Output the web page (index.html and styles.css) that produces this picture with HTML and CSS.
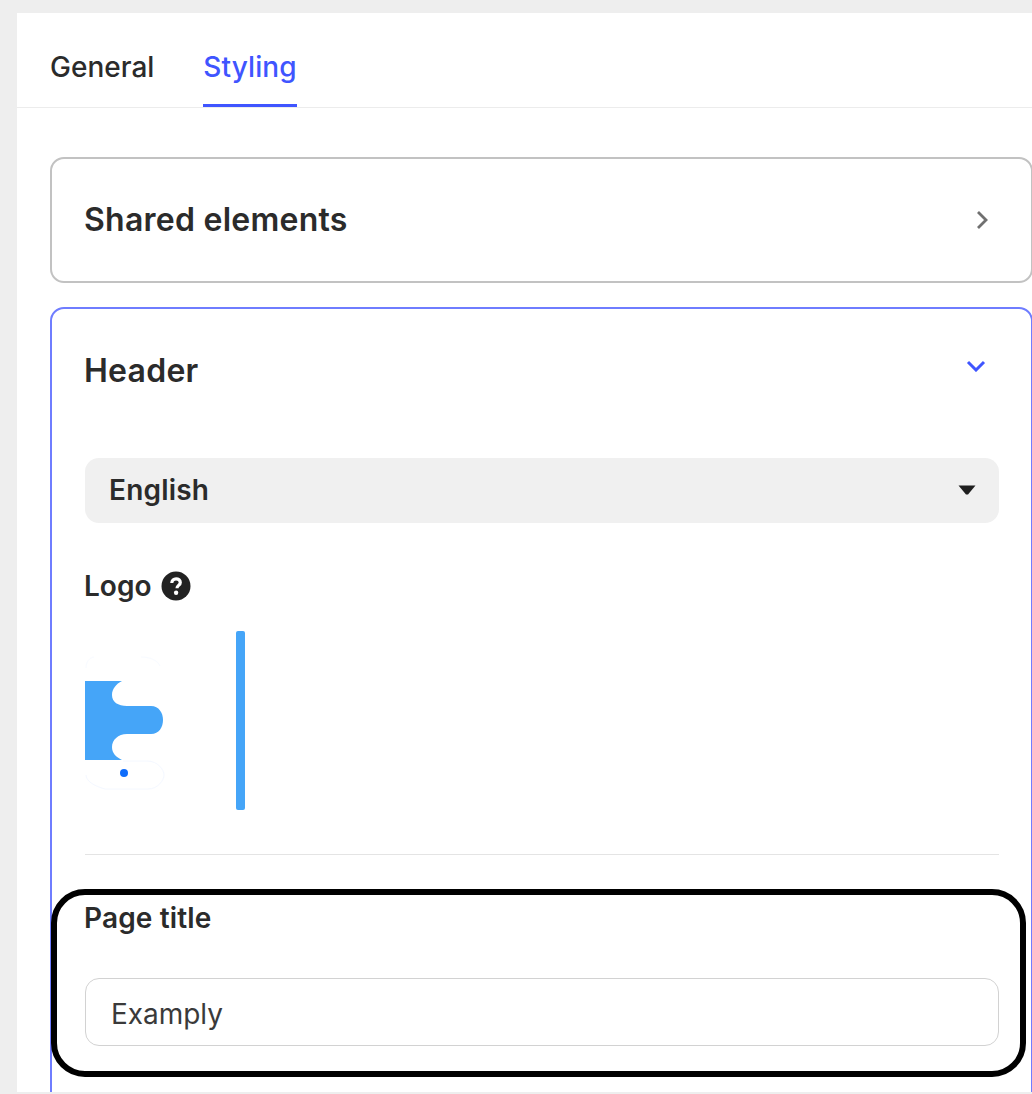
FILE: index.html
```html
<!DOCTYPE html>
<html lang="en">
<head>
<meta charset="utf-8">
<title>Styling</title>
<link rel="stylesheet" href="styles.css">
</head>
<body>
<main class="panel">
  <nav class="tabs">
    <span class="tab">General</span>
    <span class="tab tab-active">Styling</span>
  </nav>
  <div class="content">
    <section class="card">
      <div class="card-head closed">
        <h2 class="card-title">Shared elements</h2>
        <svg class="chev-right" width="14" height="20" viewBox="0 0 14 20"><path d="M3 2l8 8-8 8" fill="none" stroke="#707070" stroke-width="2.800"/></svg>
      </div>
    </section>
    <section class="card card-open">
      <div class="card-head">
        <h2 class="card-title">Header</h2>
        <svg class="chev-down" width="20" height="12" viewBox="0 0 20 12"><path d="M2 2l8 8 8-8" fill="none" stroke="#3f55ff" stroke-width="3"/></svg>
      </div>
      <div class="select">
        <span>English</span>
        <svg width="18" height="10" viewBox="0 0 18 10"><path d="M0.500 0.500h17L10 9.500H8z" fill="#1f1f1f"/></svg>
      </div>
      <div class="logo-label">
        <span>Logo</span>
        <svg width="30" height="30" viewBox="0 0 30 30"><circle cx="15" cy="15" r="14.500" fill="#222"/><path d="M10.800 12c0-2.600 1.900-4.200 4.300-4.200s4.200 1.500 4.200 3.600c0 3-3.300 3-3.300 5.800" fill="none" stroke="#fff" stroke-width="3.200"/><circle cx="15.100" cy="21.800" r="2.200" fill="#fff"/></svg>
      </div>
      <div class="logo-row">
        <svg width="161" height="180" viewBox="0 0 161 180">
          <path d="M0 50h37c-6 3-10 8-10 14 0 7 6 11 15 11h24c8 0 12 7 12 14s-4 14-12 14H42c-9 0-15 6-15 13 0 6 4 10 10 13H0z" fill="#45a5f8"/>
          <path d="M1 37c0-6 3-10 8-11M56 26c10 0 17 4 19 9" fill="none" stroke="#f8fbff" stroke-width="1"/>
          <path d="M38 130h24c11 0 17 9 17 14s-6 14-16 14H20C9 155 1 150 1 144" fill="none" stroke="#f4f8ff" stroke-width="1"/>
          <circle cx="39" cy="142" r="4" fill="#0f6dfb"/>
          <rect x="151" y="0" width="9" height="179" rx="2" fill="#45a5f8"/>
        </svg>
      </div>
      <hr class="divider">
      <label class="field-label">Page title</label>
      <div class="input">Examply</div>
    </section>
  </div>
</main>
<div class="highlight"></div>
</body>
</html>
```
FILE: styles.css
```css
* { box-sizing: border-box; }
html, body { margin: 0; height: 1094px; overflow: hidden; }
body {
  background: #eeeeee;
  font-family: Inter, "Liberation Sans", sans-serif;
  color: #2b2b2b;
  padding: 13px 0 2px 17px;
  position: relative;
}
.panel { background: #fff; height: 1079px; overflow: hidden; }
.tabs {
  display: flex;
  gap: 49px;
  height: 95px;
  padding-left: 33px;
  border-bottom: 1px solid #ececec;
}
.tab {
  font-size: 28px;
  font-weight: 450;
  line-height: 34px;
  padding-top: 37px;
  height: 94px;
}
.tab-active { color: #3f55ff; font-weight: 500; border-bottom: 3px solid #3f55ff; letter-spacing: 0.1px; }
.content {
  display: flex;
  flex-direction: column;
  gap: 24px;
  padding: 49px 0 0 33px;
}
.card {
  border: 2px solid #c2c2c2;
  border-radius: 14px;
  width: 983px;
  padding: 0 33px 0 32px;
  flex: none;
}
.card-open { border-color: #6f7dff; height: 900px; }
.card-head { display: flex; justify-content: space-between; align-items: center; height: 123px; }
.card-head.closed { height: 122px; padding-right: 9px; }
.card-title { margin: 0; font-size: 32px; font-weight: 600; line-height: 38px; letter-spacing: 0.25px; }
.card-open .card-head { height: 117px; padding-right: 12px; align-items: flex-start; padding-top: 43px; }
.chev-down { margin-top: 8px; }
.select {
  display: flex;
  justify-content: space-between;
  align-items: center;
  height: 65px;
  margin: 32px 0 0 1px;
  width: 914px;
  padding: 0 23px 2px 24px;
  background: #f0f0f0;
  border-radius: 14px;
  font-size: 28px;
  font-weight: 600;
  letter-spacing: 0.2px;
}
.logo-label {
  display: flex;
  align-items: center;
  gap: 10px;
  margin: 47px 0 0;
  height: 32px;
  font-size: 28px;
  font-weight: 600;
}
.logo-row { display: flex; margin: 29px 0 0 1px; height: 181px; }
.divider { border: 0; border-top: 1px solid #e4e4e4; margin: 42px 0 0 1px; width: 914px; }
.field-label { display: block; margin: 46px 0 0; font-size: 28px; font-weight: 600; line-height: 34px; letter-spacing: 0.15px; }
.input {
  display: flex;
  align-items: center;
  margin: 43px 0 0 1px;
  width: 914px;
  height: 68px;
  padding: 3px 0 0 25px;
  border: 1px solid #d2d2d2;
  border-radius: 14px;
  font-size: 28px;
  letter-spacing: -0.05px;
  color: #3a3a3a;
}
.highlight {
  position: absolute;
  left: 51px;
  top: 889px;
  width: 975px;
  height: 188px;
  border: 6px solid #000;
  border-radius: 34px;
}
```
